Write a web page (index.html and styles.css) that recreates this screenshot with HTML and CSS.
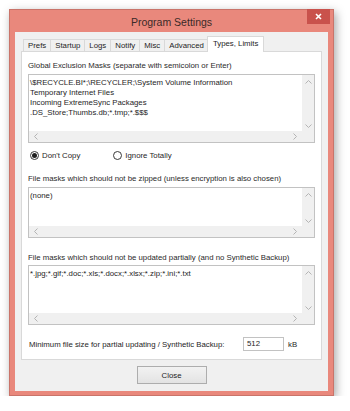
FILE: index.html
```html
<!DOCTYPE html>
<html lang="en">
<head>
  <meta charset="UTF-8" />
  <title>Program Settings</title>
  <link rel="stylesheet" href="styles.css">
</head>
<body>
  <div class="window">
    <div class="titlebar">
      <span class="title">Program Settings</span>
      <div class="close-x">
        <svg width="7" height="7" viewBox="0 0 7 7"><path d="M1 1L6 6M6 1L1 6" stroke="#fff" stroke-width="1.6"/></svg>
      </div>
    </div>

    <div class="client">
      <!-- TABS -->
      <div class="tabs">
        <div class="tab">Prefs</div>
        <div class="tab">Startup</div>
        <div class="tab">Logs</div>
        <div class="tab">Notify</div>
        <div class="tab">Misc</div>
        <div class="tab">Advanced</div>
        <div class="tab active">Types, Limits</div>
      </div>

      <div class="panel">
        <div class="field-label">Global Exclusion Masks (separate with semicolon or Enter)</div>
        <div class="textbox box-1">
          <div class="textbox-text">\$RECYCLE.BI*;\RECYCLER;\System Volume Information<br>Temporary Internet Files<br>Incoming ExtremeSync Packages<br>.DS_Store;Thumbs.db;*.tmp;*.$$$</div>
          <div class="vscroll">
            <svg width="7" height="4" viewBox="0 0 7 4"><path d="M0.5 3.5L3.5 0.5L6.5 3.5" fill="none" stroke="#b4b4b4"/></svg>
            <svg width="7" height="4" viewBox="0 0 7 4"><path d="M0.5 0.5L3.5 3.5L6.5 0.5" fill="none" stroke="#b4b4b4"/></svg>
          </div>
          <div class="hscroll">
            <svg width="4" height="7" viewBox="0 0 4 7"><path d="M3.5 0.5L0.5 3.5L3.5 6.5" fill="none" stroke="#b4b4b4"/></svg>
            <svg width="4" height="7" viewBox="0 0 4 7"><path d="M0.5 0.5L3.5 3.5L0.5 6.5" fill="none" stroke="#b4b4b4"/></svg>
          </div>
          <div class="corner"></div>
        </div>

        <div class="radios">
          <label class="radio"><span class="dot checked"></span>Don't Copy</label>
          <label class="radio"><span class="dot"></span>Ignore Totally</label>
        </div>

        <div class="field-label">File masks which should not be zipped (unless encryption is also chosen)</div>
        <div class="textbox box-2">
          <div class="textbox-text">(none)</div>
          <div class="vscroll">
            <svg width="7" height="4" viewBox="0 0 7 4"><path d="M0.5 3.5L3.5 0.5L6.5 3.5" fill="none" stroke="#b4b4b4"/></svg>
            <svg width="7" height="4" viewBox="0 0 7 4"><path d="M0.5 0.5L3.5 3.5L6.5 0.5" fill="none" stroke="#b4b4b4"/></svg>
          </div>
          <div class="hscroll">
            <svg width="4" height="7" viewBox="0 0 4 7"><path d="M3.5 0.5L0.5 3.5L3.5 6.5" fill="none" stroke="#b4b4b4"/></svg>
            <svg width="4" height="7" viewBox="0 0 4 7"><path d="M0.5 0.5L3.5 3.5L0.5 6.5" fill="none" stroke="#b4b4b4"/></svg>
          </div>
          <div class="corner"></div>
        </div>

        <div class="field-label label-3">File masks which should not be updated partially (and no Synthetic Backup)</div>
        <div class="textbox box-3">
          <div class="textbox-text">*.jpg;*.gif;*.doc;*.xls;*.docx;*.xlsx;*.zip;*.ini;*.txt</div>
          <div class="vscroll">
            <svg width="7" height="4" viewBox="0 0 7 4"><path d="M0.5 3.5L3.5 0.5L6.5 3.5" fill="none" stroke="#b4b4b4"/></svg>
            <svg width="7" height="4" viewBox="0 0 7 4"><path d="M0.5 0.5L3.5 3.5L6.5 0.5" fill="none" stroke="#b4b4b4"/></svg>
          </div>
          <div class="hscroll">
            <svg width="4" height="7" viewBox="0 0 4 7"><path d="M3.5 0.5L0.5 3.5L3.5 6.5" fill="none" stroke="#b4b4b4"/></svg>
            <svg width="4" height="7" viewBox="0 0 4 7"><path d="M0.5 0.5L3.5 3.5L0.5 6.5" fill="none" stroke="#b4b4b4"/></svg>
          </div>
          <div class="corner"></div>
        </div>

        <div class="size-row">
          <span class="size-label">Minimum file size for partial updating / Synthetic Backup:</span>
          <span class="size-input">512</span>
          <span class="size-unit">kB</span>
        </div>
      </div>

      <div class="footer">
        <button class="btn">Close</button>
      </div>
    </div>
  </div>
</body>
</html>
```

FILE: styles.css
```css
:root {
  --frame: #e9887c;
  --frame-edge: #c9746a;
  --close: #c9524c;
  --client: #f0f0f0;
  --line: #d9d9d9;
  --box-line: #c2c2c2;
  --scroll: #f0f0f0;
  --text: #1e1e1e;
  --ui-font: 'Liberation Sans', Arial, sans-serif;
}

body {
  margin: 0;
  background: #ffffff;
  font-family: var(--ui-font);
  color: var(--text);
}

.window {
  position: relative;
  margin: 9px 0 0 9px;
  width: 325px;
  height: 387px;
  box-sizing: border-box;
  background: var(--frame);
  border: 1px solid var(--frame-edge);
  padding: 0 5px 4px 5px;
  display: flex;
  flex-direction: column;
  box-shadow: 2px 3px 9px rgba(0, 0, 0, 0.35);
}

.titlebar {
  height: 22px;
  display: flex;
  align-items: center;
  justify-content: center;
}

.title {
  font-size: 10.5px;
  color: #3a2a28;
  margin-top: 1px;
}

.close-x {
  position: absolute;
  top: -1px;
  right: 3px;
  width: 23px;
  height: 15px;
  background: var(--close);
  display: flex;
  align-items: center;
  justify-content: center;
}

.client {
  flex: 1;
  background: var(--client);
  padding: 5px 6px 0 6px;
  display: flex;
  flex-direction: column;
}

/* tabs */
.tabs {
  display: flex;
  align-items: flex-end;
  height: 14px;
  padding-left: 2px;
  position: relative;
  z-index: 1;
}

.tab {
  height: 11px;
  line-height: 11px;
  font-size: 7.8px;
  padding: 0 4px;
  border: 1px solid var(--line);
  border-bottom: none;
  margin-left: -1px;
  background: var(--client);
}

.tab:first-child {
  margin-left: 0;
}

.tab.active {
  height: 15px;
  line-height: 13px;
  margin: 0 -2px -1px -2px;
  padding: 0 5px;
  background: #ffffff;
  position: relative;
}

.panel {
  height: 309px;
  box-sizing: border-box;
  background: #ffffff;
  border: 1px solid var(--line);
  padding: 9px 6px 0 6px;
  display: flex;
  flex-direction: column;
}

.field-label {
  font-size: 7.8px;
  line-height: 10px;
  color: #2a2a2a;
  margin-bottom: 3px;
}

.label-3 {
  margin-top: 15px;
  margin-bottom: 2px;
}

/* fake multiline edit boxes */
.textbox {
  display: grid;
  grid-template-columns: 1fr 12px;
  grid-template-rows: 1fr 11px;
  border: 1px solid var(--box-line);
  box-sizing: border-box;
}

.box-1 { height: 69px; }
.box-2 { height: 51px; }
.box-3 { height: 60px; }

.textbox-text {
  font-size: 7.8px;
  line-height: 10px;
  padding: 3px 0 0 1px;
  white-space: nowrap;
  overflow: hidden;
}

.vscroll {
  background: var(--scroll);
  display: flex;
  flex-direction: column;
  justify-content: space-between;
  align-items: center;
  padding: 5px 0 3px 0;
}

.hscroll {
  background: var(--scroll);
  display: flex;
  justify-content: space-between;
  align-items: center;
  padding: 0 5px;
}

.corner {
  background: var(--scroll);
}

.radios {
  display: flex;
  gap: 33px;
  height: 10px;
  margin: 7px 0 14px 2px;
}

.radio {
  display: flex;
  align-items: center;
  gap: 3px;
  font-size: 7.8px;
}

.dot {
  width: 9px;
  height: 9px;
  box-sizing: border-box;
  border: 1px solid #3a3a3a;
  border-radius: 50%;
  background: #ffffff;
  display: flex;
  align-items: center;
  justify-content: center;
}

.dot.checked::after {
  content: "";
  width: 5px;
  height: 5px;
  border-radius: 50%;
  background: #202020;
}

.size-row {
  display: flex;
  align-items: center;
  margin-top: 12px;
  font-size: 7.8px;
}

.size-label {
  width: 214px;
  padding-left: 1px;
  color: var(--text);
}

.size-input {
  width: 41px;
  height: 14px;
  box-sizing: border-box;
  border: 1px solid var(--box-line);
  line-height: 12px;
  padding-left: 3px;
}

.size-unit {
  margin-left: 4px;
}

.footer {
  display: flex;
  justify-content: center;
  padding-top: 6px;
}

.btn {
  width: 70px;
  height: 18px;
  border: 1px solid #adadad;
  background: linear-gradient(#f2f2f2, #e3e3e3);
  font-family: var(--ui-font);
  font-size: 7.8px;
  color: var(--text);
  padding: 0;
}
```
